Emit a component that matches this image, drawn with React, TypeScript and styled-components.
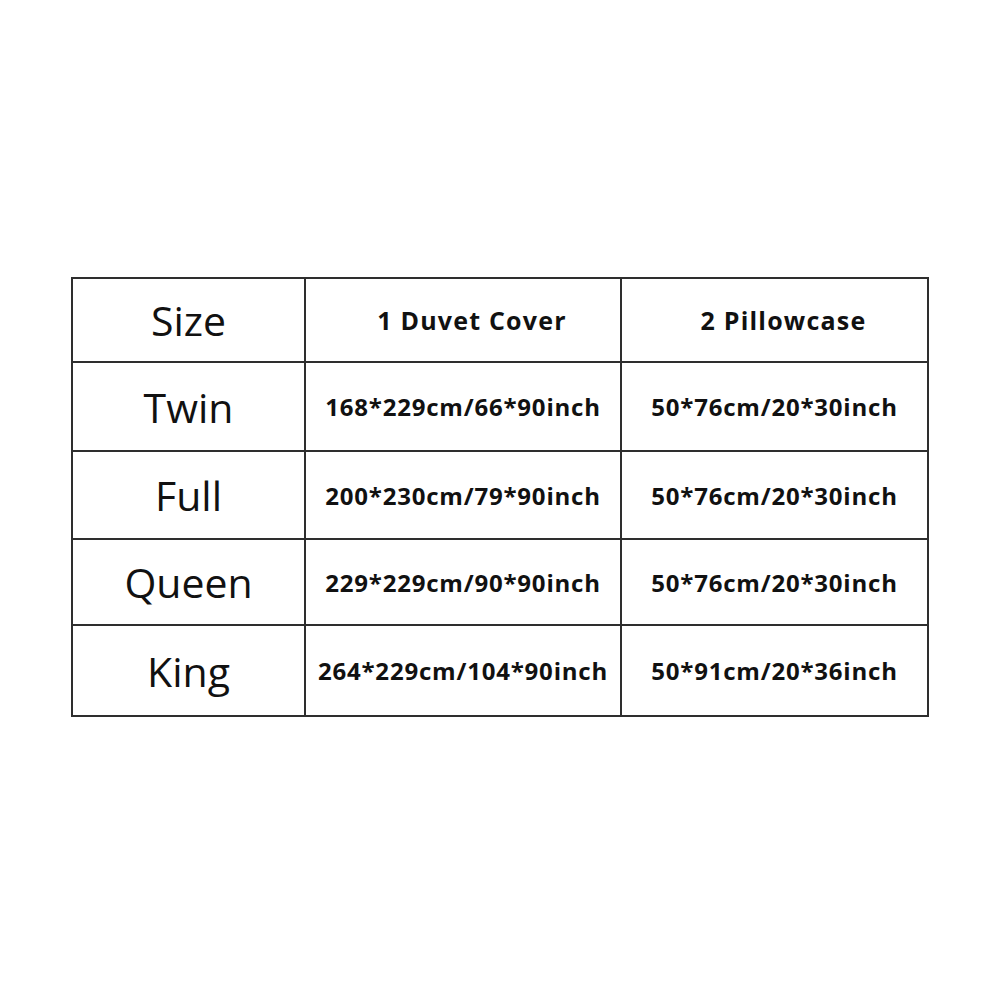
import React from 'react'
import styled, { createGlobalStyle } from 'styled-components'

const GlobalStyle = createGlobalStyle`
  html, body {
    margin: 0;
    padding: 0;
    background: #ffffff;
  }
  body {
    font-family: "Open Sans", "Noto Sans", sans-serif;
    color: #111111;
  }
`

const Page = styled.div`
  width: 1000px;
  height: 1000px;
  box-sizing: border-box;
  padding-top: 277px;
  padding-left: 71px;
  background: #ffffff;
`

const Grid = styled.div`
  display: grid;
  grid-template-columns: 231px 314px 305px;
  grid-template-rows: 82px 87px 86px 84px 89px;
  gap: 2px;
  padding: 2px;
  width: 858px;
  box-sizing: border-box;
  background: #2e2e2e;
`

const Cell = styled.div<{ $head?: boolean; $label?: boolean }>`
  background: #ffffff;
  display: flex;
  align-items: center;
  justify-content: center;
  padding-left: ${({ $head }) => ($head ? '18px' : '0')};
  font-size: ${({ $label, $head }) => ($label ? '41px' : $head ? '25px' : '24px')};
  font-weight: ${({ $label }) => ($label ? 400 : 700)};
  letter-spacing: ${({ $label, $head }) => ($label ? '0' : $head ? '1.2px' : '0.8px')};
  white-space: nowrap;
  color: #111111;
`

const rows = [
  ['Twin', '168*229cm/66*90inch', '50*76cm/20*30inch'],
  ['Full', '200*230cm/79*90inch', '50*76cm/20*30inch'],
  ['Queen', '229*229cm/90*90inch', '50*76cm/20*30inch'],
  ['King', '264*229cm/104*90inch', '50*91cm/20*36inch'],
]

const App: React.FC = () => {
  return (
    <Page>
      <GlobalStyle />
      <Grid>
        <Cell $label>Size</Cell>
        <Cell $head>1 Duvet Cover</Cell>
        <Cell $head>2 Pillowcase</Cell>
        {rows.map((r) => (
          <React.Fragment key={r[0]}>
            <Cell $label>{r[0]}</Cell>
            <Cell>{r[1]}</Cell>
            <Cell>{r[2]}</Cell>
          </React.Fragment>
        ))}
      </Grid>
    </Page>
  )
}

export default App
